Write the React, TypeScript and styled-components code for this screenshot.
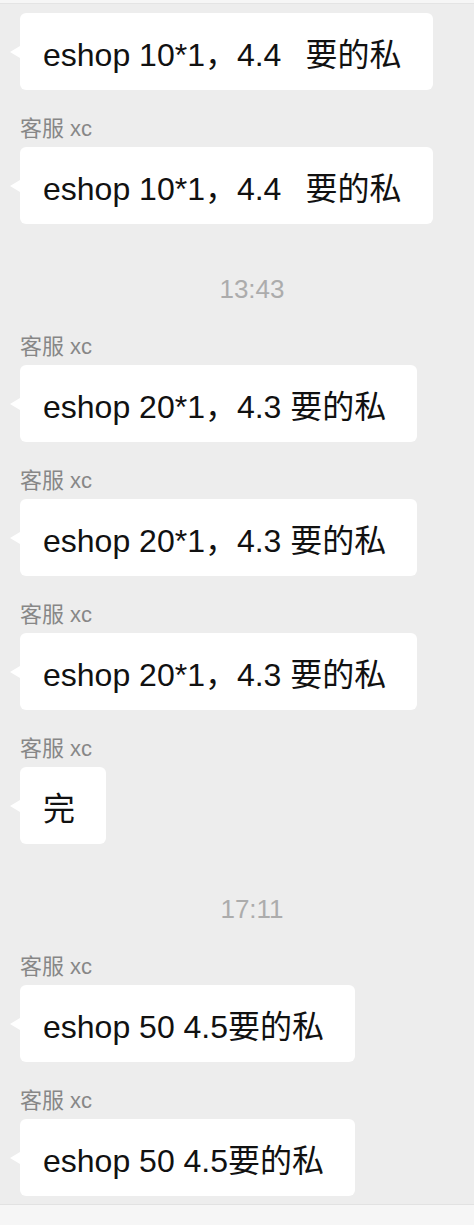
import styled, { createGlobalStyle } from 'styled-components';

const GlobalStyle = createGlobalStyle`
  html,
  body {
    margin: 0;
    padding: 0;
    background: #ededed;
  }

  * {
    box-sizing: border-box;
  }
`;

type ChatItem =
  | { kind: 'time'; text: string }
  | { kind: 'message'; sender?: string; text: string };

// the first two messages have a wider gap before 要的私
const WIDE_GAP = '\u00a0\u00a0\u2009';

const items: ChatItem[] = [
  { kind: 'message', text: `eshop 10*1，4.4${WIDE_GAP}要的私` },
  { kind: 'message', sender: '客服 xc', text: `eshop 10*1，4.4${WIDE_GAP}要的私` },
  { kind: 'time', text: '13:43' },
  { kind: 'message', sender: '客服 xc', text: 'eshop 20*1，4.3 要的私' },
  { kind: 'message', sender: '客服 xc', text: 'eshop 20*1，4.3 要的私' },
  { kind: 'message', sender: '客服 xc', text: 'eshop 20*1，4.3 要的私' },
  { kind: 'message', sender: '客服 xc', text: '完' },
  { kind: 'time', text: '17:11' },
  { kind: 'message', sender: '客服 xc', text: 'eshop 50 4.5要的私' },
  { kind: 'message', sender: '客服 xc', text: 'eshop 50 4.5要的私' },
];

const ChatScreen = styled.div`
  display: flex;
  flex-direction: column;
  width: 474px;
  height: 1225px;
  overflow: hidden;
  background: #ededed;
  font-family: 'Liberation Sans', 'Noto Sans CJK SC', sans-serif;
`;

const TopEdge = styled.div`
  flex-shrink: 0;
  height: 4px;
  background: #f6f6f6;
  border-bottom: 1px solid #e4e4e4;
`;

const MessageList = styled.div`
  flex: 1;
  min-height: 0;
  overflow: hidden;
  display: flex;
  flex-direction: column;
  gap: 27px;
  padding: 9px 0 0 20px;
`;

const TimeStamp = styled.div`
  margin: 23px 0 4px;
  padding-left: 10px;
  text-align: center;
  font-size: 26px;
  line-height: 30px;
  color: #acacac;
`;

const MessageGroup = styled.div`
  display: flex;
  flex-direction: column;
  align-items: flex-start;
`;

const SenderName = styled.div`
  margin-bottom: 6px;
  font-size: 22px;
  line-height: 24px;
  color: #878787;
`;

const Bubble = styled.div`
  position: relative;
  height: 77px;
  display: flex;
  align-items: center;
  padding: 0 31px 0 23px;
  border-radius: 6px;
  background: #ffffff;
  color: #111111;
  font-size: 32px;
  white-space: nowrap;

  &::before {
    content: '';
    position: absolute;
    left: -10px;
    top: 50%;
    margin-top: -6px;
    border-style: solid;
    border-width: 6px 10px 6px 0;
    border-color: transparent #ffffff transparent transparent;
  }
`;

const BottomBar = styled.div`
  flex-shrink: 0;
  height: 21px;
  background: #f6f6f6;
  border-top: 1px solid #e2e2e2;
`;

export default function App() {
  return (
    <>
      <GlobalStyle />
      <ChatScreen>
        <TopEdge />
        <MessageList>
          {items.map((item, i) =>
            item.kind === 'time' ? (
              <TimeStamp key={i}>{item.text}</TimeStamp>
            ) : (
              <MessageGroup key={i}>
                {item.sender && <SenderName>{item.sender}</SenderName>}
                <Bubble>{item.text}</Bubble>
              </MessageGroup>
            )
          )}
        </MessageList>
        <BottomBar />
      </ChatScreen>
    </>
  );
}
